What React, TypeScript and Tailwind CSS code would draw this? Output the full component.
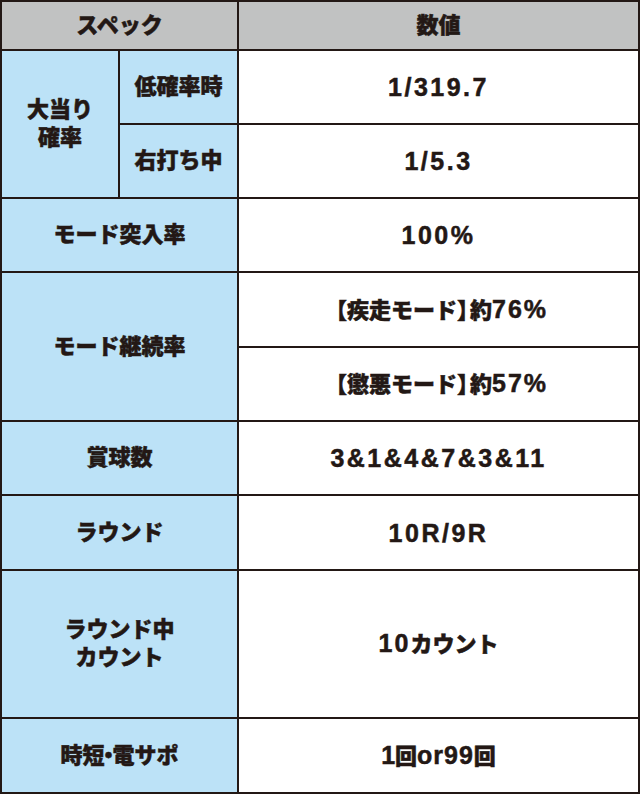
import React from "react";

const font = {
  fontFamily: '"Liberation Sans", "Noto Sans CJK JP", sans-serif',
};

function Cell({
  children,
  className = "",
}: {
  children: React.ReactNode;
  className?: string;
}) {
  return (
    <div
      className={`flex items-center justify-center text-center font-black text-[#231815] leading-[28px] [-webkit-text-stroke:0.5px_#231815] ${className}`}
    >
      {children}
    </div>
  );
}

export default function App() {
  const lab = "bg-[#bce2f7] text-[22px]";
  const val = "bg-white text-[25px] tracking-[0.1em]";
  return (
    <div className="w-[640px] bg-white" style={font}>
      <div className="grid w-[640px] grid-cols-[116px_117px_1fr] grid-rows-[47px_72px_72px_72px_73px_72px_72px_73px_146px_73px] gap-[2px] bg-[#231815] p-[2px]">
        <Cell className="col-span-2 bg-[#c1c2c2] text-[22px]">スペック</Cell>
        <Cell className="bg-[#c1c2c2] text-[22px]">数値</Cell>

        <Cell className={`row-span-2 ${lab}`}>
          <span>
            大当り
            <br />
            確率
          </span>
        </Cell>
        <Cell className={lab}>低確率時</Cell>
        <Cell className={val}>1/319.7</Cell>
        <Cell className={lab}>右打ち中</Cell>
        <Cell className={val}>1/5.3</Cell>

        <Cell className={`col-span-2 ${lab}`}>モード突入率</Cell>
        <Cell className={val}>100%</Cell>

        <Cell className={`col-span-2 row-span-2 ${lab}`}>モード継続率</Cell>
        <Cell className="bg-white text-[22px]">
          <span>
            <span className="-ml-[4px]">【</span>疾走モード
            <span className="tracking-[-9px]">】</span>約
            <span className="text-[25px] tracking-[0.08em]">76%</span>
          </span>
        </Cell>
        <Cell className="bg-white text-[22px]">
          <span>
            <span className="-ml-[4px]">【</span>懲悪モード
            <span className="tracking-[-9px]">】</span>約
            <span className="text-[25px] tracking-[0.08em]">57%</span>
          </span>
        </Cell>

        <Cell className={`col-span-2 ${lab}`}>賞球数</Cell>
        <Cell className={val}>3&amp;1&amp;4&amp;7&amp;3&amp;11</Cell>

        <Cell className={`col-span-2 ${lab}`}>ラウンド</Cell>
        <Cell className={val}>10R/9R</Cell>

        <Cell className={`col-span-2 ${lab}`}>
          <span>
            ラウンド中
            <br />
            カウント
          </span>
        </Cell>
        <Cell className="bg-white text-[22px]">
          <span>
            <span className="text-[25px] tracking-[0.08em]">10</span>カウント
          </span>
        </Cell>

        <Cell className={`col-span-2 ${lab}`}>
          <span>
            時短<span className="-mx-[7px]">・</span>電サポ
          </span>
        </Cell>
        <Cell className="bg-white text-[22px]">
          <span>
            <span className="text-[25px]">1</span>回
            <span className="text-[25px] tracking-[0.04em]">or99</span>回
          </span>
        </Cell>
      </div>
    </div>
  );
}
